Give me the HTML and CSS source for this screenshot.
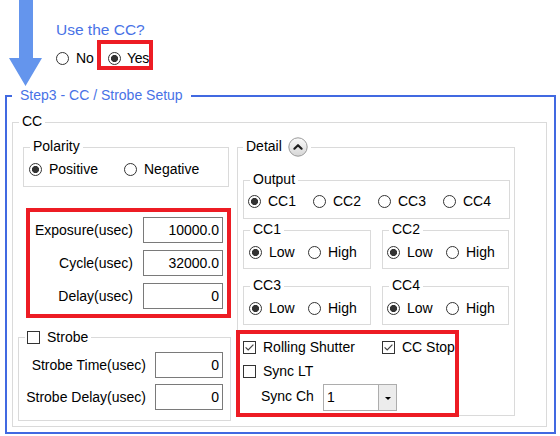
FILE: index.html
```html
<!DOCTYPE html>
<html>
<head>
<meta charset="utf-8">
<title>CC / Strobe Setup</title>
<link rel="stylesheet" href="styles.css">
</head>
<body>
<div class="top">
  <svg class="arrow" width="56" height="87" viewBox="0 0 56 87"><polygon points="19,0 33,0 33,58 42,58 25.5,86 9,58 19,58" fill="#6495ed"/></svg>
  <div class="usecc">
    <div class="usecc-title">Use the CC?</div>
    <div class="usecc-opts">
      <label class="radio no"><span class="rb"></span>No</label>
      <div class="mark mark-yes"><label class="radio yes"><span class="rb on"></span>Yes</label></div>
    </div>
  </div>
</div>
<fieldset class="step">
  <legend>Step3 - CC / Strobe Setup</legend>
  <fieldset class="grp cc">
    <legend>CC</legend>
    <div class="cc-body">
      <div class="col-left">
        <fieldset class="grp polarity">
          <legend>Polarity</legend>
          <div class="opts pol-opts">
            <label class="radio w-pos"><span class="rb on"></span>Positive</label>
            <label class="radio"><span class="rb"></span>Negative</label>
          </div>
        </fieldset>
        <div class="mark mark-timing">
          <div class="form timing-form">
            <span class="lbl">Exposure(usec)</span><span class="num">10000.0</span>
            <span class="lbl">Cycle(usec)</span><span class="num">32000.0</span>
            <span class="lbl">Delay(usec)</span><span class="num">0</span>
          </div>
        </div>
        <fieldset class="grp strobe">
          <legend class="lg-strobe"><span class="lg-in"><span class="cb"></span><span>Strobe</span></span></legend>
          <div class="form strobe-form">
            <span class="lbl">Strobe Time(usec)</span><span class="num">0</span>
            <span class="lbl">Strobe Delay(usec)</span><span class="num">0</span>
          </div>
        </fieldset>
      </div>
      <fieldset class="grp detail">
        <legend class="lg-detail"><span class="lg-in"><span class="dtxt">Detail</span><svg class="expander" width="20" height="20" viewBox="0 0 20 20"><defs><linearGradient id="eg" x1="0" y1="0" x2="0" y2="1"><stop offset="0" stop-color="#fbfbfb"/><stop offset="1" stop-color="#d6d6d6"/></linearGradient></defs><circle cx="10" cy="10" r="9.2" fill="url(#eg)" stroke="#9a9a9a"/><path d="M6.4 11.7 L10 8.2 L13.6 11.7" fill="none" stroke="#1e1e1e" stroke-width="2.2" stroke-linecap="round" stroke-linejoin="round"/></svg></span></legend>
        <div class="detail-body">
          <fieldset class="grp output">
            <legend>Output</legend>
            <div class="opts4">
              <label class="radio"><span class="rb on"></span>CC1</label>
              <label class="radio"><span class="rb"></span>CC2</label>
              <label class="radio"><span class="rb"></span>CC3</label>
              <label class="radio"><span class="rb"></span>CC4</label>
            </div>
          </fieldset>
          <div class="ccrow">
            <fieldset class="grp ccx cc-a">
              <legend>CC1</legend>
              <div class="opts2"><label class="radio w-low"><span class="rb on"></span>Low</label><label class="radio"><span class="rb"></span>High</label></div>
            </fieldset>
            <fieldset class="grp ccx cc-b">
              <legend>CC2</legend>
              <div class="opts2"><label class="radio w-low"><span class="rb on"></span>Low</label><label class="radio"><span class="rb"></span>High</label></div>
            </fieldset>
          </div>
          <div class="ccrow ccrow2">
            <fieldset class="grp ccx cc-a">
              <legend>CC3</legend>
              <div class="opts2"><label class="radio w-low"><span class="rb on"></span>Low</label><label class="radio"><span class="rb"></span>High</label></div>
            </fieldset>
            <fieldset class="grp ccx cc-b">
              <legend>CC4</legend>
              <div class="opts2"><label class="radio w-low"><span class="rb on"></span>Low</label><label class="radio"><span class="rb"></span>High</label></div>
            </fieldset>
          </div>
          <div class="mark mark-sync">
            <div class="chk-row">
              <label class="check w-roll"><span class="cb"><svg width="11" height="11" viewBox="0 0 11 11"><path d="M1.6 5.4 L4.2 8 L9.4 2.6" fill="none" stroke="#444" stroke-width="1.2"/></svg></span>Rolling Shutter</label>
              <label class="check"><span class="cb"><svg width="11" height="11" viewBox="0 0 11 11"><path d="M1.6 5.4 L4.2 8 L9.4 2.6" fill="none" stroke="#444" stroke-width="1.2"/></svg></span>CC Stop</label>
            </div>
            <div class="chk-row chk-row2">
              <label class="check"><span class="cb"></span>Sync LT</label>
            </div>
            <div class="sync-row">
              <span class="sync-lbl">Sync Ch</span>
              <div class="combo"><span class="combo-val">1</span><span class="combo-btn"><span class="tri"></span></span></div>
            </div>
          </div>
        </div>
      </fieldset>
    </div>
  </fieldset>
</fieldset>
</body>
</html>
```

FILE: styles.css
```css
* { box-sizing: border-box; }
html, body { margin: 0; padding: 0; }
body {
  width: 560px;
  height: 436px;
  overflow: hidden;
  background: #fff;
  color: #000;
  font-family: "Liberation Sans", Arial, sans-serif;
  font-size: 14px;
}

/* top question */
.top { display: flex; height: 87px; }
.arrow { display: block; flex: none; }
.usecc { padding-top: 21px; }
.usecc-title { font-size: 15.5px; line-height: 18px; color: #4872e6; }
.usecc-opts { display: flex; align-items: flex-start; gap: 3px; margin-top: 1px; }
.no { margin-top: 10px; }

/* radios & checks */
.radio, .check {
  display: flex;
  align-items: center;
  gap: 7px;
  height: 16px;
  line-height: 16px;
  white-space: nowrap;
}
.radio.yes { gap: 6px; letter-spacing: -0.3px; }
.rb {
  flex: none;
  width: 13px;
  height: 13px;
  border: 1px solid #333;
  border-radius: 50%;
  background: #fff;
}
.rb.on { background: radial-gradient(circle, #333 0 3.2px, #fff 3.9px); }
.cb {
  flex: none;
  display: flex;
  align-items: center;
  justify-content: center;
  width: 13px;
  height: 13px;
  border: 1px solid #333;
  background: #fff;
}
.cb svg { display: block; }

/* red annotation frames */
.mark { border: 4px solid #ed1c24; }
.mark-yes { width: 56px; height: 30px; padding: 6px 0 0 7px; }

/* group boxes */
fieldset {
  margin: 0;
  padding: 0;
  min-width: 0;
  border: 1px solid #dadada;
}
legend {
  margin-left: 6px;
  padding: 0 3px 2px;
  line-height: 15px;
  font-size: 14px;
}

.step {
  margin-left: 5px;
  width: 551px;
  border: 2px solid #4169e1;
  padding: 9px 0 5px 0;
}
.step > legend {
  margin-left: 5px;
  padding: 0 8px 2px;
  line-height: 16px;
  color: #4872e6;
}

.cc { margin-left: 5px; width: 535px; padding: 0 0 5px 0; }
.cc-body { display: flex; align-items: flex-start; gap: 6px; padding: 8px 0 0 5px; }

.col-left { width: 213px; display: flex; flex-direction: column; }

.polarity { margin-left: 5px; width: 206px; padding: 5px 0 9px 0; }
.opts { display: flex; }
.pol-opts { padding-left: 5px; }
.w-pos { width: 95px; }

.mark-timing { margin: 21px 0 0 8px; width: 205px; padding: 5px 4px 5px 0; }
.form { display: grid; align-items: center; }
.timing-form { grid-template-columns: 1fr 80px; column-gap: 10px; row-gap: 7px; }
.lbl { text-align: right; line-height: 26px; white-space: nowrap; }
.num {
  height: 26px;
  border: 1px solid #7a7a7a;
  text-align: right;
  padding-right: 3px;
  line-height: 24px;
  background: #fff;
}

.strobe { margin-top: 11px; width: 213px; padding: 6px 0 10px 0; }
.lg-strobe { padding: 1px 3px 1px 2px; }
.lg-in { display: flex; align-items: center; gap: 7px; }
.strobe-form { grid-template-columns: 1fr 68px; column-gap: 9px; row-gap: 6px; padding-right: 7px; }

/* detail */
.detail { width: 278px; margin-top: -2px; padding: 0; }
.lg-detail { margin-left: 5px; padding: 0 3px; line-height: normal; }
.lg-detail .lg-in { align-items: flex-start; gap: 6px; height: 21px; }
.dtxt { line-height: 16px; margin-top: 1px; }
.expander { display: block; flex: none; }
.detail-body { padding: 0 4px 0 5px; }

.output { margin-top: 14px; padding: 4px 0 9px 0; }
.opts4 { display: grid; grid-template-columns: repeat(4, 65px); padding-left: 4px; }

.ccrow { display: flex; gap: 11px; margin-top: 3px; }
.ccrow2 { margin-top: 9px; }
.ccx { padding: 5px 0 8px 0; }
.cc-a { width: 128px; }
.cc-b { width: 127px; }
.opts2 { display: flex; padding-left: 5px; }
.cc-b .opts2 { padding-left: 4px; }
.w-low { width: 59px; }

.mark-sync {
  margin: 5px 0 -2px -7px;
  width: 223px;
  height: 87px;
  padding: 5px 0 0 3px;
  background: #fff;
}
.chk-row { display: flex; }
.chk-row2 { margin-top: 8px; }
.w-roll { width: 139px; }
.sync-row {
  display: grid;
  grid-template-columns: 62px 74px;
  align-items: start;
  margin-top: 5px;
  padding-left: 18px;
}
.sync-lbl { line-height: 16px; padding-top: 4px; white-space: nowrap; }
.combo {
  display: flex;
  height: 27px;
  border: 1px solid #adadad;
  background: #fff;
}
.combo-val { flex: 1; padding-left: 3px; line-height: 25px; }
.combo-btn {
  width: 18px;
  border-left: 1px solid #adadad;
  background: #ececec;
  display: flex;
  align-items: center;
  justify-content: center;
}
.tri {
  width: 0;
  height: 0;
  border-left: 3px solid transparent;
  border-right: 3px solid transparent;
  border-top: 3px solid #000;
  margin-top: 1px;
}
```
